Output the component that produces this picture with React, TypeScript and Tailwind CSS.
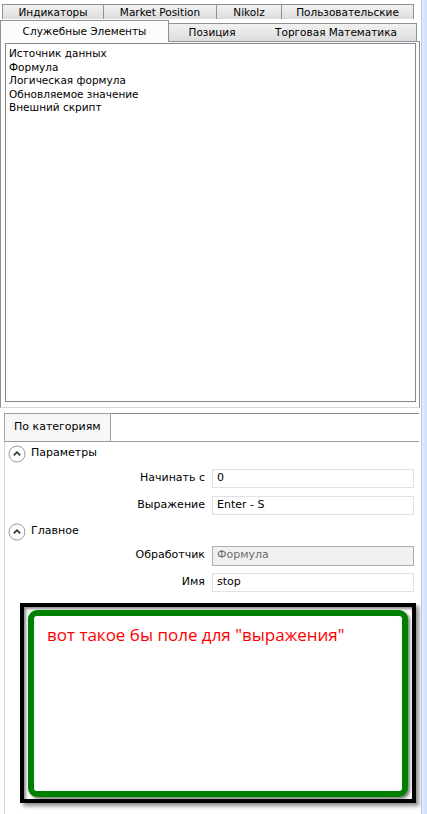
import React from 'react';

const topRow = [
  { label: 'Индикаторы', w: 'w-[102px]' },
  { label: 'Market Position', w: 'w-[114px]' },
  { label: 'Nikolz', w: 'w-[66px]' },
  { label: 'Пользовательские', w: 'w-[133px]' },
];

const items = [
  'Источник данных',
  'Формула',
  'Логическая формула',
  'Обновляемое значение',
  'Внешний скрипт',
];

function Chevron() {
  return (
    <svg width="18" height="18" viewBox="0 0 18 18" className="shrink-0">
      <circle cx="9" cy="9" r="8" fill="#fff" stroke="#9a9a9a" />
      <path d="M5.8 10.3 L9 7.2 L12.2 10.3" fill="none" stroke="#333" strokeWidth="1.7" />
    </svg>
  );
}

function Field({ label, value, disabled, h }: { label: string; value: string; disabled?: boolean; h: string }) {
  return (
    <div className={`flex items-center ${h}`}>
      <div className="w-[204px] text-right">{label}</div>
      <div
        className={
          disabled
            ? 'ml-[7px] w-[202px] h-[20px] border border-[#adadad] bg-[#f0f0f0] text-[#6d6d6d] pl-[4px] flex items-center'
            : 'ml-[7px] w-[202px] h-[19px] border border-[#dde2ea] bg-white pl-[4px] flex items-center'
        }
      >
        {value}
      </div>
    </div>
  );
}

export default function App() {
  return (
    <div
      className="w-[427px] h-[814px] flex bg-white overflow-hidden text-[10.5px] text-black"
      style={{ fontFamily: '"DejaVu Sans", Tahoma, sans-serif' }}
    >
      <div className="w-[421px] flex flex-col">
        {/* tab strip */}
        <div className="h-[19px] pt-[4px] pl-[2px] flex">
          {topRow.map((t) => (
            <div
              key={t.label}
              className={`${t.w} h-[15px] border-t border-l border-r border-[#8e9096] -ml-px first:ml-0 bg-gradient-to-b from-[#f2f2f2] to-[#dcdcdc] flex items-center justify-center leading-none`}
            >
              {t.label}
            </div>
          ))}
        </div>
        <div className="h-[22px] flex items-end">
          <div className="relative z-10 w-[169px] h-[22px] -mb-px border-t border-l border-r border-[#8e9096] bg-[#fcfcfc] flex items-center justify-center leading-none">
            Служебные Элементы
          </div>
          <div className="w-[89px] h-[18px] -ml-px border-t border-r border-[#8e9096] bg-gradient-to-b from-[#f2f2f2] to-[#dcdcdc] flex items-center justify-center leading-none">
            Позиция
          </div>
          <div className="w-[161px] h-[18px] -ml-px border-t border-r border-[#8e9096] bg-gradient-to-b from-[#f2f2f2] to-[#dcdcdc] flex items-center justify-center leading-none">
            Торговая Математика
          </div>
        </div>

        {/* list frame */}
        <div className="h-[367px] w-[420px] border border-[#8e9096] border-b-[#d9d9d9] bg-[#fcfcfc] pt-[1px] pl-[4px] pr-[3px] pb-[5px]">
          <div className="w-[411px] h-full border border-[#828790] bg-white pt-[3px] pl-[3px] leading-[13.5px]">
            {items.map((i) => (
              <div key={i}>{i}</div>
            ))}
          </div>
        </div>

        <div className="h-[5px]" />

        {/* property grid */}
        <div className="h-[28px] flex">
          <div className="ml-[4px] w-[107px] border-t border-l border-r border-[#a0a0a0] bg-[#f7f7f7] flex items-center pl-[9px] text-[11px]">
            По категориям
          </div>
          <div className="w-[308px] border-t border-[#8a8a8a]" />
        </div>
        <div className="ml-[4px] w-[415px] flex-1 border-l border-t border-[#9a9a9a] border-l-[#d4d4d4] text-[11px]">
          <div className="h-[23px] flex items-center pl-[3px] gap-[5px]">
            <Chevron />
            <span>Параметры</span>
          </div>
          <div className="-ml-[4px]">
            <Field label="Начинать с" value="0" h="h-[27px]" />
            <Field label="Выражение" value="Enter - S" h="h-[27px]" />
          </div>
          <div className="h-[25px] flex items-center pl-[3px] gap-[5px]">
            <Chevron />
            <span>Главное</span>
          </div>
          <div className="-ml-[4px]">
            <Field label="Обработчик" value="Формула" disabled h="h-[23px]" />
            <Field label="Имя" value="stop" h="h-[31px]" />
          </div>

          <div className="mt-[5px] ml-[15px] w-[396px] h-[200px] border-[4px] border-black bg-white pt-[3px] pl-[4px] pr-[4px] pb-[2px] shadow-[3px_3px_4px_rgba(0,0,0,0.45),inset_2px_2px_3px_rgba(0,0,0,0.45)]">
            <div
              className="h-full border-[6px] border-[#008000] rounded-[9px] bg-white pt-[7px] pl-[13px] text-[17px] leading-[23px] text-[#ff0000] shadow-[2px_2px_3px_rgba(0,0,0,0.5)]"
              style={{ fontFamily: '"Open Sans", "Noto Sans", sans-serif' }}
            >
              вот такое бы поле для "выражения"
            </div>
          </div>
        </div>
      </div>

      {/* right scrollbar edge */}
      <div className="w-[6px] h-full border-l border-[#b6c9e6] bg-gradient-to-r from-[#e4eefb] to-[#cddff5] ml-[1px]" />
    </div>
  );
}
